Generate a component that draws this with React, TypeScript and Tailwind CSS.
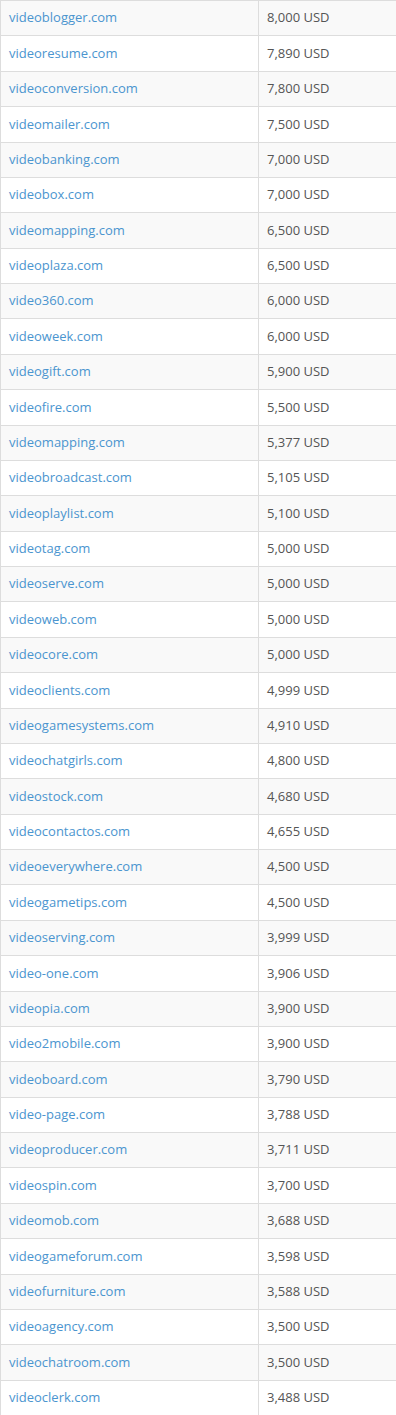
const domains: [string, string][] = [
  ["videoblogger.com", "8,000"],
  ["videoresume.com", "7,890"],
  ["videoconversion.com", "7,800"],
  ["videomailer.com", "7,500"],
  ["videobanking.com", "7,000"],
  ["videobox.com", "7,000"],
  ["videomapping.com", "6,500"],
  ["videoplaza.com", "6,500"],
  ["video360.com", "6,000"],
  ["videoweek.com", "6,000"],
  ["videogift.com", "5,900"],
  ["videofire.com", "5,500"],
  ["videomapping.com", "5,377"],
  ["videobroadcast.com", "5,105"],
  ["videoplaylist.com", "5,100"],
  ["videotag.com", "5,000"],
  ["videoserve.com", "5,000"],
  ["videoweb.com", "5,000"],
  ["videocore.com", "5,000"],
  ["videoclients.com", "4,999"],
  ["videogamesystems.com", "4,910"],
  ["videochatgirls.com", "4,800"],
  ["videostock.com", "4,680"],
  ["videocontactos.com", "4,655"],
  ["videoeverywhere.com", "4,500"],
  ["videogametips.com", "4,500"],
  ["videoserving.com", "3,999"],
  ["video-one.com", "3,906"],
  ["videopia.com", "3,900"],
  ["video2mobile.com", "3,900"],
  ["videoboard.com", "3,790"],
  ["video-page.com", "3,788"],
  ["videoproducer.com", "3,711"],
  ["videospin.com", "3,700"],
  ["videomob.com", "3,688"],
  ["videogameforum.com", "3,598"],
  ["videofurniture.com", "3,588"],
  ["videoagency.com", "3,500"],
  ["videochatroom.com", "3,500"],
  ["videoclerk.com", "3,488"],
];

export default function App() {
  return (
    <div className="w-[396px] h-[1415px] overflow-hidden bg-white font-['Open_Sans',sans-serif] text-[13px] text-[#555]">
      <div className="border-l border-[#ddd]">
        {domains.map(([name, price], i) => (
          <div
            key={i}
            className={`grid grid-cols-[257px_1fr] h-[35.375px] border-t border-[#ddd] ${
              i % 2 === 0 ? "bg-[#f9f9f9]" : "bg-white"
            }`}
          >
            <div className="flex items-center px-2">
              <a href="#" className="text-[#4b95cf] no-underline">
                {name}
              </a>
            </div>
            <div className="flex items-center px-2 border-l border-[#ddd]">
              {price} USD
            </div>
          </div>
        ))}
      </div>
    </div>
  );
}
